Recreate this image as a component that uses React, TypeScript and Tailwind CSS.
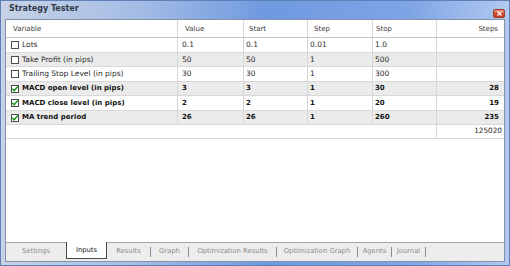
import React from "react";

type Row = {
  name: string;
  value: string;
  start: string;
  step: string;
  stop: string;
  steps: string;
  checked: boolean;
  h: string;
  bg: string;
};

const rows: Row[] = [
  { name: "Lots", value: "0.1", start: "0.1", step: "0.01", stop: "1.0", steps: "", checked: false, h: "h-[15px]", bg: "bg-white" },
  { name: "Take Profit (in pips)", value: "50", start: "50", step: "1", stop: "500", steps: "", checked: false, h: "h-[14px]", bg: "bg-[#ebebeb]" },
  { name: "Trailing Stop Level (in pips)", value: "30", start: "30", step: "1", stop: "300", steps: "", checked: false, h: "h-[15px]", bg: "bg-white" },
  { name: "MACD open level (in pips)", value: "3", start: "3", step: "1", stop: "30", steps: "28", checked: true, h: "h-[14px]", bg: "bg-[#ebebeb]" },
  { name: "MACD close level (in pips)", value: "2", start: "2", step: "1", stop: "20", steps: "19", checked: true, h: "h-[15px]", bg: "bg-white" },
  { name: "MA trend period", value: "26", start: "26", step: "1", stop: "260", steps: "235", checked: true, h: "h-[14px]", bg: "bg-[#ebebeb]" },
];

const GRID = "grid grid-cols-[171px_66px_64px_65px_64px_68px]";

function CheckBox({ checked }: { checked: boolean }) {
  return (
    <span className="relative w-[8px] h-[8px] border border-[#4d4d4d] bg-white shrink-0 block">
      {checked && (
        <svg className="absolute left-[-1px] top-[-1px]" width="8" height="8" viewBox="0 0 8 8">
          <path d="M1.4 3.8 L3.1 5.8 L6.8 1.4" stroke="#1f9a1f" strokeWidth="1.5" fill="none" />
        </svg>
      )}
    </span>
  );
}

function Sep() {
  return <span className="w-px h-[10px] mt-[4px] bg-[#8a8a8a] shrink-0" />;
}

export default function App() {
  return (
    <div
      className="w-[510px] h-[266px] border border-[#5f80b6] bg-[linear-gradient(90deg,#c7d3e6_0%,#a3bbe5_28%,#6f9ae0_52%,#7ea4e6_80%,#b2c9f0_100%)] flex flex-col overflow-hidden"
      style={{ fontFamily: '"DejaVu Sans", sans-serif' }}
    >
      {/* Title bar */}
      <div className="h-[17px] flex justify-between shrink-0">
        <div className="h-[15px] flex items-center pl-[8px] text-[8px] font-bold text-[#2f3a4a]">
          Strategy Tester
        </div>
        <div className="mt-[8px] mr-[4px] w-[12px] h-[9px] rounded-[2px] border border-[#9c3a24] bg-[linear-gradient(#ec9a80,#cf4f32_55%,#c2432a)] flex items-center justify-center">
          <svg width="5" height="5" viewBox="0 0 5 5">
            <path d="M0.5 0.5 L4.5 4.5 M4.5 0.5 L0.5 4.5" stroke="#ffffff" strokeWidth="1.1" />
          </svg>
        </div>
      </div>

      {/* Content */}
      <div className="flex-1 mt-[1px] mx-[4px] mb-[3px] border border-[#8391a6] bg-white flex flex-col text-[7px]">
        {/* Header */}
        <div className={`${GRID} h-[18px] border-b border-[#c4c4c4] text-[#3a3a3a]`}>
          <div className="flex items-center pt-[2px] pl-[7px]">Variable</div>
          <div className="flex items-center pt-[2px] pl-[7px] border-l border-[#d6d6d6]">Value</div>
          <div className="flex items-center pt-[2px] pl-[5px] border-l border-[#d6d6d6]">Start</div>
          <div className="flex items-center pt-[2px] pl-[6px] border-l border-[#d6d6d6]">Step</div>
          <div className="flex items-center pt-[2px] pl-[3px] border-l border-[#d6d6d6]">Stop</div>
          <div className="flex items-center justify-end pt-[2px] pr-[6px] border-l border-[#d6d6d6]">Steps</div>
        </div>

        {/* Rows */}
        {rows.map((r) => (
          <div
            key={r.name}
            className={`${GRID} ${r.h} ${r.bg} border-b border-[#d8d8d8] ${r.checked ? "font-bold text-[7px] text-[#111111]" : "text-[7.5px] text-[#2a2a2a]"}`}
          >
            <div className="flex items-center pl-[5px] gap-[3px] whitespace-nowrap">
              <CheckBox checked={r.checked} />
              <span>{r.name}</span>
            </div>
            <div className="flex items-center pl-[4px] border-l border-[#d6d6d6]">{r.value}</div>
            <div className="flex items-center pl-[2px] border-l border-[#d6d6d6]">{r.start}</div>
            <div className="flex items-center pl-[2px] border-l border-[#d6d6d6]">{r.step}</div>
            <div className="flex items-center pl-[2px] border-l border-[#d6d6d6]">{r.stop}</div>
            <div className="flex items-center justify-end pr-[5px] border-l border-[#d6d6d6]">{r.steps}</div>
          </div>
        ))}

        {/* Total row */}
        <div className={`${GRID} h-[14px] border-b border-[#d8d8d8] text-[#2a2a2a] text-[7.3px]`}>
          <div className="col-span-5" />
          <div className="flex items-center justify-end pr-[2px] border-l border-[#d6d6d6]">125020</div>
        </div>

        <div className="flex-1" />

        {/* Tab strip */}
        <div className="h-[19px] border-t border-[#a6a6a6] bg-[#ededed] flex items-start text-[6.8px] text-[#8c8c8c] shrink-0">
          <div className="w-[60px] h-[16px] flex items-center justify-center">Settings</div>
          <div className="w-[41px] h-[17px] -mt-[1px] bg-white border-l border-r border-b border-[#4a4a4a] flex items-center justify-center text-[#1e1e1e]">
            Inputs
          </div>
          <div className="w-[43px] h-[16px] flex items-center justify-center">Results</div>
          <Sep />
          <div className="w-[37px] h-[16px] flex items-center justify-center">Graph</div>
          <Sep />
          <div className="w-[87px] h-[16px] flex items-center justify-center whitespace-nowrap">Optimization Results</div>
          <Sep />
          <div className="w-[80px] h-[16px] flex items-center justify-center whitespace-nowrap">Optimization Graph</div>
          <Sep />
          <div className="w-[33px] h-[16px] flex items-center justify-center">Agents</div>
          <Sep />
          <div className="w-[33px] h-[16px] flex items-center justify-center">Journal</div>
          <Sep />
        </div>
      </div>
    </div>
  );
}
